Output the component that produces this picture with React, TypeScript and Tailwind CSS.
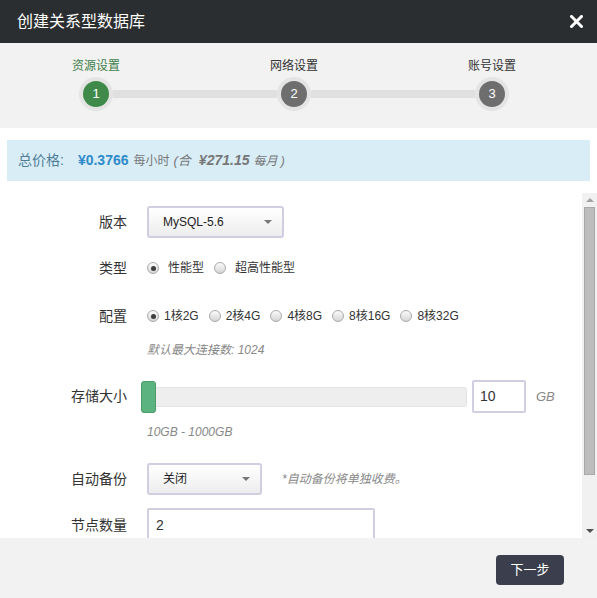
import type { ReactNode } from "react";

const FONT = "font-['Liberation_Sans','Noto_Sans_CJK_SC',sans-serif]";

const STEPS = [
  { label: "资源设置", n: 1, active: true },
  { label: "网络设置", n: 2, active: false },
  { label: "账号设置", n: 3, active: false },
];

const CONFIGS = ["1核2G", "2核4G", "4核8G", "8核16G", "8核32G"];

function Radio({ checked }: { checked?: boolean }) {
  return (
    <span className="flex h-[12px] w-[12px] shrink-0 items-center justify-center rounded-full border border-[#aaaaaa] bg-linear-to-b from-[#fbfbfb] to-[#d5d5d5]">
      {checked && <span className="h-[5px] w-[5px] rounded-full bg-[#3d3d3d]" />}
    </span>
  );
}

function Caret() {
  return <span className="h-0 w-0 border-x-[4px] border-t-[4px] border-x-transparent border-t-[#777777]" />;
}

function Select({ value, width }: { value: string; width: string }) {
  return (
    <div
      className={`flex h-[32px] ${width} items-center justify-between rounded-[3px] border-2 border-[#d0cee0] bg-linear-to-b from-white to-[#ededed] pl-[14px] pr-[10px] text-[12px] text-[#222]`}
    >
      <span>{value}</span>
      <Caret />
    </div>
  );
}

function Row({ label, children, className = "" }: { label: string; children: ReactNode; className?: string }) {
  return (
    <div className={`flex items-center ${className}`}>
      <span className="w-[127px] shrink-0 text-right text-[14px] text-[#333]">{label}</span>
      {children}
    </div>
  );
}

export default function App() {
  return (
    <div className={`flex h-[598px] w-[597px] flex-col overflow-hidden bg-white ${FONT}`}>
      {/* header */}
      <div className="flex h-[43px] shrink-0 items-center justify-between bg-[#2b2e30] pl-[17px] pr-[14px]">
        <span className="text-[16px] text-white">创建关系型数据库</span>
        <svg width="13" height="13" viewBox="0 0 13 13">
          <path d="M1.5 1.5 L11.5 11.5 M11.5 1.5 L1.5 11.5" stroke="white" strokeWidth="3" strokeLinecap="square" />
        </svg>
      </div>

      {/* steps */}
      <div className="h-[85px] shrink-0 bg-[#f2f2f2] pl-[79px] pr-[88px] pt-[15px]">
        <div className="flex justify-between">
          {STEPS.map((s) => (
            <div key={s.n} className="flex w-[34px] justify-center">
              <span
                className={`whitespace-nowrap text-[12px] leading-[16px] ${s.active ? "text-[#3d7f48]" : "text-[#333]"}`}
              >
                {s.label}
              </span>
            </div>
          ))}
        </div>
        <div className="mt-[3px] flex items-center">
          {STEPS.map((s, i) => (
            <div key={s.n} className={`flex items-center ${i < STEPS.length - 1 ? "flex-1" : ""}`}>
              <span className="flex h-[34px] w-[34px] shrink-0 items-center justify-center rounded-full bg-[#e4e4e4]">
                <span
                  className={`flex h-[26px] w-[26px] items-center justify-center rounded-full text-[13px] text-white ${
                    s.active ? "bg-[#3f8a4a]" : "bg-[#6e6e6e]"
                  }`}
                >
                  {s.n}
                </span>
              </span>
              {i < STEPS.length - 1 && <span className="h-[8px] flex-1 bg-[#e0e0e0]" />}
            </div>
          ))}
        </div>
      </div>

      {/* price */}
      <div className="mx-[7px] mt-[12px] flex h-[41px] shrink-0 items-center bg-[#d9edf7] pl-[11px] text-[#777]">
        <span className="text-[14px] text-[#4f7d96]">总价格:</span>
        <span className="ml-[14px] text-[14px] font-bold text-[#2f8bca]">¥0.3766</span>
        <span className="ml-[5px] text-[12px]">每小时</span>
        <span className="ml-[4px] text-[13px] italic">(合</span>
        <span className="ml-[8px] text-[14px] font-bold italic">¥271.15</span>
        <span className="ml-[4px] text-[12px] italic">每月 )</span>
      </div>

      {/* scroll area */}
      <div className="mt-[12px] flex h-[345px] shrink-0">
        <div className="flex-1 overflow-hidden pt-[13px]">
          <Row label="版本" className="h-[32px]">
            <div className="ml-[20px]">
              <Select value="MySQL-5.6" width="w-[137px]" />
            </div>
          </Row>

          <Row label="类型" className="mt-[20px] h-[20px]">
            <div className="ml-[20px] flex items-center text-[12px] text-[#333]">
              <Radio checked />
              <span className="ml-[9px]">性能型</span>
              <span className="ml-[10px]">
                <Radio />
              </span>
              <span className="ml-[9px]">超高性能型</span>
            </div>
          </Row>

          <Row label="配置" className="mt-[28px] h-[20px]">
            <div className="ml-[20px] flex items-center text-[12px] text-[#333]">
              {CONFIGS.map((c, i) => (
                <div key={c} className={`flex items-center ${i > 0 ? "ml-[10px]" : ""}`}>
                  <Radio checked={i === 0} />
                  <span className="ml-[5px]">{c}</span>
                </div>
              ))}
            </div>
          </Row>

          <div className="ml-[147px] mt-[16px] h-[16px] text-[12px] italic leading-[16px] text-[#888]">
            默认最大连接数: 1024
          </div>

          <Row label="存储大小" className="mt-[22px] h-[33px]">
            <div className="relative ml-[14px] h-[20px] w-[326px] rounded-[3px] border border-[#e4e4e4] bg-[#eeeeee]">
              <span className="absolute left-[-1px] top-[-7px] h-[32px] w-[15px] rounded-[3px] border border-[#4b9b6b] bg-[#5bb47f]" />
            </div>
            <div className="ml-[5px] flex h-[33px] w-[54px] items-center rounded-[2px] border-2 border-[#d0cee0] pl-[6px] text-[14px] text-[#333]">
              10
            </div>
            <span className="ml-[10px] text-[13px] italic text-[#888]">GB</span>
          </Row>

          <div className="ml-[147px] mt-[11px] h-[16px] text-[12px] italic leading-[16px] text-[#888]">
            10GB - 1000GB
          </div>

          <Row label="自动备份" className="mt-[23px] h-[32px]">
            <div className="ml-[20px]">
              <Select value="关闭" width="w-[115px]" />
            </div>
            <span className="ml-[20px] text-[12px] italic text-[#888]">*自动备份将单独收费。</span>
          </Row>

          <Row label="节点数量" className="mt-[13px] h-[34px]">
            <div className="ml-[20px] flex h-[34px] w-[228px] items-center rounded-[2px] border-2 border-[#d0cee0] pl-[7px] text-[14px] text-[#333]">
              2
            </div>
          </Row>
        </div>

        {/* scrollbar */}
        <div className="flex w-[15px] shrink-0 flex-col bg-[#f1f1f1]">
          <div className="flex h-[14px] items-center justify-center">
            <span className="h-0 w-0 border-x-[4px] border-b-[4px] border-x-transparent border-b-[#a3a3a3]" />
          </div>
          <div className="ml-[2px] h-[268px] w-[11px] border border-[#a9a9a9] bg-[#bdbdbd]" />
          <div className="flex-1" />
          <div className="flex h-[14px] items-center justify-center">
            <span className="h-0 w-0 border-x-[4px] border-t-[4px] border-x-transparent border-t-[#505050]" />
          </div>
        </div>
      </div>

      {/* footer */}
      <div className="flex flex-1 justify-end bg-[#f2f2f2] pr-[33px] pt-[17px]">
        <button className="h-[30px] w-[68px] rounded-[4px] bg-[#3b3e4c] text-[13px] text-white">下一步</button>
      </div>
    </div>
  );
}
